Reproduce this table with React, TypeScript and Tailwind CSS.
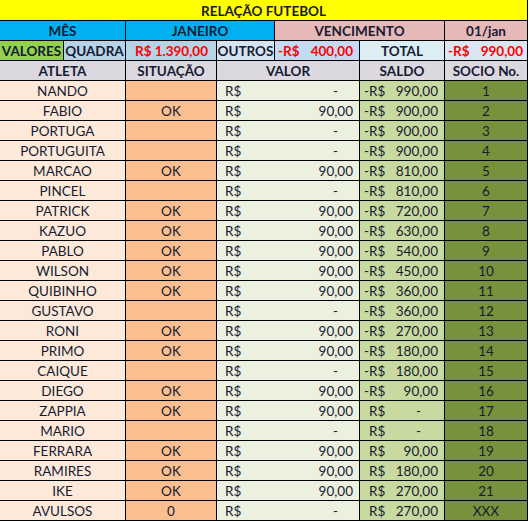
import React from "react";

type Row = {
  nome: string;
  sit: string;
  valor: string;
  neg: boolean;
  saldo: string;
  socio: string;
};

const rows: Row[] = [
  { nome: "NANDO", sit: "", valor: "-", neg: true, saldo: "990,00", socio: "1" },
  { nome: "FABIO", sit: "OK", valor: "90,00", neg: true, saldo: "900,00", socio: "2" },
  { nome: "PORTUGA", sit: "", valor: "-", neg: true, saldo: "900,00", socio: "3" },
  { nome: "PORTUGUITA", sit: "", valor: "-", neg: true, saldo: "900,00", socio: "4" },
  { nome: "MARCAO", sit: "OK", valor: "90,00", neg: true, saldo: "810,00", socio: "5" },
  { nome: "PINCEL", sit: "", valor: "-", neg: true, saldo: "810,00", socio: "6" },
  { nome: "PATRICK", sit: "OK", valor: "90,00", neg: true, saldo: "720,00", socio: "7" },
  { nome: "KAZUO", sit: "OK", valor: "90,00", neg: true, saldo: "630,00", socio: "8" },
  { nome: "PABLO", sit: "OK", valor: "90,00", neg: true, saldo: "540,00", socio: "9" },
  { nome: "WILSON", sit: "OK", valor: "90,00", neg: true, saldo: "450,00", socio: "10" },
  { nome: "QUIBINHO", sit: "OK", valor: "90,00", neg: true, saldo: "360,00", socio: "11" },
  { nome: "GUSTAVO", sit: "", valor: "-", neg: true, saldo: "360,00", socio: "12" },
  { nome: "RONI", sit: "OK", valor: "90,00", neg: true, saldo: "270,00", socio: "13" },
  { nome: "PRIMO", sit: "OK", valor: "90,00", neg: true, saldo: "180,00", socio: "14" },
  { nome: "CAIQUE", sit: "", valor: "-", neg: true, saldo: "180,00", socio: "15" },
  { nome: "DIEGO", sit: "OK", valor: "90,00", neg: true, saldo: "90,00", socio: "16" },
  { nome: "ZAPPIA", sit: "OK", valor: "90,00", neg: false, saldo: "-", socio: "17" },
  { nome: "MARIO", sit: "", valor: "-", neg: false, saldo: "-", socio: "18" },
  { nome: "FERRARA", sit: "OK", valor: "90,00", neg: false, saldo: "90,00", socio: "19" },
  { nome: "RAMIRES", sit: "OK", valor: "90,00", neg: false, saldo: "180,00", socio: "20" },
  { nome: "IKE", sit: "OK", valor: "90,00", neg: false, saldo: "270,00", socio: "21" },
  { nome: "AVULSOS", sit: "0", valor: "-", neg: false, saldo: "270,00", socio: "XXX" },
];

const cell = "flex items-center justify-center pt-[2px]";
const split = "flex items-center justify-between pt-[2px]";

export default function App() {
  return (
    <div className="w-[530px] h-[522px] bg-white font-['Lato',sans-serif] text-[13.5px] text-[#161b33]">
      <div className="grid w-[528px] grid-cols-[63px_61px_90px_57px_84px_84px_82px] grid-rows-[20px] auto-rows-[19px] gap-px bg-black pr-px pb-px">
        {/* title */}
        <div className={`${cell} col-span-7 bg-[#ffff00] font-bold text-[#1a1a2e]`}>RELAÇÃO FUTEBOL</div>

        {/* month row */}
        <div className={`${cell} col-span-2 bg-[#00b0f0] font-bold`}>MÊS</div>
        <div className={`${cell} col-span-2 bg-[#00b0f0] font-bold`}>JANEIRO</div>
        <div className={`${cell} col-span-2 bg-[#e6b8b7] font-bold`}>VENCIMENTO</div>
        <div className={`${cell} bg-[#e6b8b7] font-bold`}>01/jan</div>

        {/* values row */}
        <div className={`${cell} bg-[#92d050] font-bold`}>VALORES</div>
        <div className={`${cell} bg-[#b7d3e6] font-bold`}>QUADRA</div>
        <div className={`${split} bg-[#b7d3e6] pl-[9px] pr-[8px] font-bold text-[#ff0000]`}>
          <span>R$</span>
          <span>1.390,00</span>
        </div>
        <div className={`${cell} bg-[#d6e3f0] font-bold`}>OUTROS</div>
        <div className={`${split} bg-[#c5d9f1] pl-[3px] pr-[6px] font-bold text-[#ff0000]`}>
          <span>-R$</span>
          <span>400,00</span>
        </div>
        <div className={`${cell} bg-[#dceef4] font-bold`}>TOTAL</div>
        <div className={`${split} bg-[#dce6f1] pl-[3px] pr-[4px] font-bold text-[#ff0000]`}>
          <span>-R$</span>
          <span>990,00</span>
        </div>

        {/* header */}
        <div className={`${cell} col-span-2 bg-[#dbd8df] font-bold`}>ATLETA</div>
        <div className={`${cell} bg-[#dbd8df] font-bold`}>SITUAÇÃO</div>
        <div className={`${cell} col-span-2 bg-[#dbd8df] font-bold`}>VALOR</div>
        <div className={`${cell} bg-[#dbd8df] font-bold`}>SALDO</div>
        <div className={`${cell} bg-[#dbd8df] font-bold`}>SOCIO No.</div>

        {rows.map((r) => (
          <React.Fragment key={r.nome}>
            <div className={`${cell} col-span-2 bg-[#fde9d9]`}>{r.nome}</div>
            <div className={`${cell} bg-[#fabf8f]`}>{r.sit}</div>
            <div className={`${split} col-span-2 bg-[#ebf1de] pl-[8px] pr-[6px]`}>
              <span>R$</span>
              <span className={r.valor === "-" ? "pr-[15px]" : ""}>{r.valor}</span>
            </div>
            <div className={`${split} bg-[#c8da9f] pl-[4px] pr-[6px]`}>
              <span>
                <span className={r.neg ? "" : "invisible"}>-</span>R$
              </span>
              <span className={r.saldo === "-" ? "pr-[17px]" : ""}>{r.saldo}</span>
            </div>
            <div className={`${cell} bg-[#76933c]`}>{r.socio}</div>
          </React.Fragment>
        ))}
      </div>
    </div>
  );
}
